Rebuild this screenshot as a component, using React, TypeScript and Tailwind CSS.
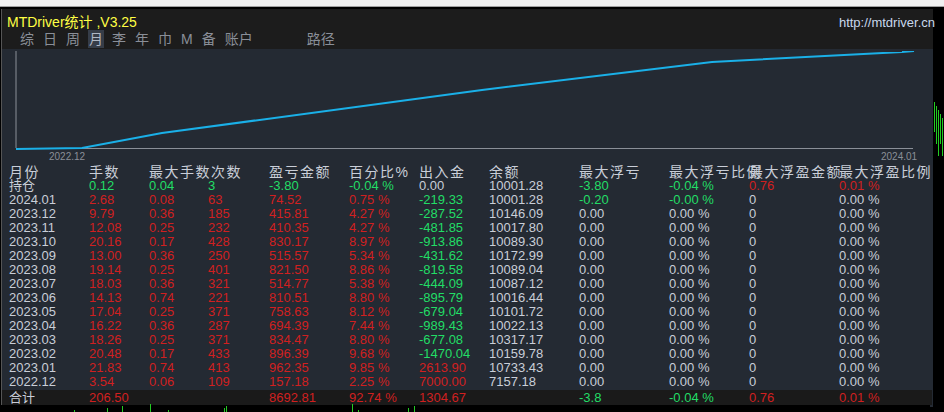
import React from "react";

const G = "text-[#c9ced8]", R = "text-[#d02020]", N = "text-[#22dd66]";
const cols = "grid grid-cols-[80px_60px_59px_61px_80px_70px_70px_90px_90px_80px_90px_100px]";

type Cell = [string, string];
const rows: Cell[][] = [];
const data: [string,string,string,string,string,string,string,string][] = [
 ["2024.01","2.68","0.08","63","74.52","0.75 %","-219.33","10001.28"],
 ["2023.12","9.79","0.36","185","415.81","4.27 %","-287.52","10146.09"],
 ["2023.11","12.08","0.25","232","410.35","4.27 %","-481.85","10017.80"],
 ["2023.10","20.16","0.17","428","830.17","8.97 %","-913.86","10089.30"],
 ["2023.09","13.00","0.36","250","515.57","5.34 %","-431.62","10172.99"],
 ["2023.08","19.14","0.25","401","821.50","8.86 %","-819.58","10089.04"],
 ["2023.07","18.03","0.36","321","514.77","5.38 %","-444.09","10087.12"],
 ["2023.06","14.13","0.74","221","810.51","8.80 %","-895.79","10016.44"],
 ["2023.05","17.04","0.25","371","758.63","8.12 %","-679.04","10101.72"],
 ["2023.04","16.22","0.36","287","694.39","7.44 %","-989.43","10022.13"],
 ["2023.03","18.26","0.25","371","834.47","8.80 %","-677.08","10317.17"],
 ["2023.02","20.48","0.17","433","896.39","9.68 %","-1470.04","10159.78"],
 ["2023.01","21.83","0.74","413","962.35","9.85 %","2613.90","10733.43"],
 ["2022.12","3.54","0.06","109","157.18","2.25 %","7000.00","7157.18"],
];
rows.push([["持仓",G],["0.12",N],["0.04",N],["3",N],["-3.80",N],["-0.04 %",N],["0.00",G],["10001.28",G],["-3.80",N],["-0.04 %",N],["0.76",R],["0.01 %",R]]);
data.forEach((d, i) => {
  const first = i === 0;
  rows.push([
    [d[0],G],[d[1],R],[d[2],R],[d[3],R],[d[4],R],[d[5],R],
    [d[6], d[6].startsWith("-") ? N : R],[d[7],G],
    [first ? "-0.20" : "0.00", first ? N : G],[first ? "-0.00 %" : "0.00 %", first ? N : G],["0",G],["0.00 %",G],
  ]);
});

const headers = ["月份","手数","最大手数次数","","盈亏金额","百分比%","出入金","余额","最大浮亏","最大浮亏比例","最大浮盈金额","最大浮盈比例"];
const tabs = ["综","日","周","月","李","年","巾","M","备","账户"];

function Chart() {
  const pts = "1,98 67,97 147,82 467,39 697,11 887,1 899,0";
  return (
    <svg width="910" height="100" className="block">
      <line x1="1" y1="0" x2="1" y2="97" stroke="#8a8f98" strokeWidth="1" />
      <line x1="1" y1="97.5" x2="898" y2="97.5" stroke="#8a8f98" strokeWidth="1" />
      <polyline points={pts} fill="none" stroke="#1ab0e8" strokeWidth="2" />
    </svg>
  );
}

export default function App() {
  return (
    <div className="w-[944px] h-[412px] bg-black overflow-hidden relative" style={{ fontFamily: '"Liberation Sans", "Noto Sans CJK SC", sans-serif' }}>
      <div className="h-[7px] bg-[#f0f0f0] border-b border-[#a0a0a0]" />
      <div className="flex">
        <div className="w-[932px] h-[398px] ml-[1px] mt-[2px] border-l border-[#555] flex flex-col">
          <div className="bg-[#1c1c1c] h-[40px] relative">
            <div className="absolute left-[5px] top-[3px] text-[14px] text-[#ffff44]">MTDriver统计 ,V3.25</div>
            <div className="absolute right-[-2px] top-[4px] text-[13px] text-[#c8d8ec]">http://mtdriver.cn</div>
            <div className="absolute left-[17px] top-[21px] flex text-[14px] text-[#8a8f98] leading-[18px]">
              {tabs.map((t, i) => (
                <span key={t} className={`${i === 3 ? "bg-[#363d48] text-[#b0b8c4]" : ""} mr-[7px] px-[1px]`}>{t}</span>
              ))}
              <span className="ml-[46px]">路径</span>
            </div>
          </div>
          <div className="bg-[#242a33] flex-1 relative">
            <div className="pl-[13px] pt-[2px]"><Chart /></div>
            <div className="absolute left-[47px] top-[100px] text-[10px] text-[#8a8f98]">2022.12</div>
            <div className="absolute left-[879px] top-[100px] text-[10px] text-[#8a8f98]">2024.01</div>
            <div className="absolute left-[7px] top-[116px] w-[925px] overflow-hidden">
              <div className={`${cols} text-[14px] leading-[14px] h-[14px] text-[#c9ced8] whitespace-nowrap tracking-[1.5px]`}>
                {headers.map((h, i) => <span key={i} className="overflow-visible">{h}</span>)}
              </div>
              {rows.map((r, i) => (
                <div key={i} className={`${cols} text-[13px] leading-[14px] h-[14px] whitespace-nowrap`}>
                  {r.map(([t, c], j) => <span key={j} className={c}>{t}</span>)}
                </div>
              ))}
            </div>
            <div className={`absolute left-0 top-[341px] w-[930px] h-[15px] bg-[#1a1a1a] pl-[7px] ${cols} text-[13px] leading-[15px] whitespace-nowrap`}>
              <span className={G}>合计</span><span className={R}>206.50</span><span /><span />
              <span className={R}>8692.81</span><span className={R}>92.74 %</span><span className={R}>1304.67</span><span />
              <span className={N}>-3.8</span><span className={N}>-0.04 %</span><span className={R}>0.76</span><span className={R}>0.01 %</span>
            </div>
          </div>
        </div>
        <div className="flex-1 relative">
          {[100,104,108,112,116,120].map((y, i) => (
            <div key={i} className="absolute w-[1px] bg-[#22cc22]" style={{ left: 1 + i * 2, top: y - 5, height: 30 + (i % 3) * 8 }} />
          ))}
        </div>
      </div>
      <div className="absolute left-0 top-[405px] w-[930px] h-[7px] bg-black">
        {[74,107,122,150,168,224,226,352,358,408,414].map((x, i) => (
          <div key={i} className="absolute w-[1px] bg-[#22cc22] bottom-0" style={{ left: x, height: 2 + (i % 4) * 2 }} />
        ))}
      </div>
    </div>
  );
}
